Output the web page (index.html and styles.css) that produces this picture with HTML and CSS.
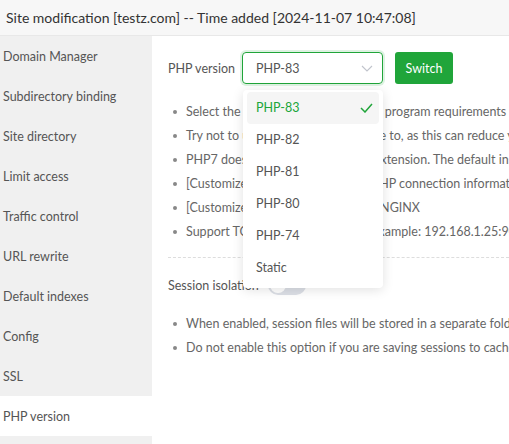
FILE: index.html
```html
<!DOCTYPE html>
<html lang="en">
<head>
<meta charset="utf-8">
<title>Site modification</title>
<link rel="stylesheet" href="styles.css">
</head>
<body>
<div class="header">Site modification [testz.com] -- Time added [2024-11-07 10:47:08]</div>
<div class="layout">
  <nav class="sidebar">
    <div class="nav-item">Domain Manager</div>
    <div class="nav-item">Subdirectory binding</div>
    <div class="nav-item">Site directory</div>
    <div class="nav-item">Limit access</div>
    <div class="nav-item">Traffic control</div>
    <div class="nav-item">URL rewrite</div>
    <div class="nav-item">Default indexes</div>
    <div class="nav-item">Config</div>
    <div class="nav-item">SSL</div>
    <div class="nav-item active">PHP version</div>
    <div class="nav-item blank"></div>
  </nav>
  <main class="main">
    <div class="form-row">
      <span class="label">PHP version</span>
      <div class="select">
        <span>PHP-83</span>
        <svg class="chevron" width="12" height="7" viewBox="0 0 12 7"><path d="M1 1l5 5 5-5" fill="none" stroke="#c0c4cc" stroke-width="1.1"/></svg>
      </div>
      <button class="btn">Switch</button>
    </div>
    <ul class="tips">
      <li>Select the version according to your program requirements</li>
      <li>Try not to use PHP5 unless you have to, as this can reduce your server security</li>
      <li>PHP7 does not support the mysql extension. The default installation includes mysqli</li>
      <li>[Customize] Customize the global PHP connection information</li>
      <li>[Customize] Currently only support NGINX</li>
      <li>Support TCP or UNIX sockets, for example: 192.168.1.25:9001</li>
    </ul>
    <div class="divider"></div>
    <div class="form-row session-row">
      <span class="label session-label">Session isolation</span>
      <span class="toggle"><span class="knob"></span></span>
    </div>
    <ul class="tips">
      <li>When enabled, session files will be stored in a separate folder "/tmp/session/"</li>
      <li>Do not enable this option if you are saving sessions to caches such as redis/memcache</li>
    </ul>
    <div class="dropdown">
      <div class="option selected">PHP-83
        <svg class="check" width="13" height="10" viewBox="0 0 13 10"><path d="M1 5l4 4 7-8" fill="none" stroke="#20a53a" stroke-width="1.5"/></svg>
      </div>
      <div class="option">PHP-82</div>
      <div class="option">PHP-81</div>
      <div class="option">PHP-80</div>
      <div class="option">PHP-74</div>
      <div class="option">Static</div>
    </div>
  </main>
</div>
</body>
</html>
```
FILE: styles.css
```css
* { box-sizing: border-box; }
html, body { margin: 0; padding: 0; }
body {
  font-family: "Segoe UI", Lato, "Liberation Sans", sans-serif;
  color: #333;
  background: #fff;
  width: 509px;
  height: 444px;
  overflow: hidden;
}
.header {
  height: 36px;
  line-height: 35px;
  padding-left: 6px;
  font-size: 14px;
  color: #333;
  background: #f7f7f7;
  border-bottom: 1px solid #e8e8e8;
  white-space: nowrap;
}
.layout {
  display: flex;
  height: 408px;
}
.sidebar {
  width: 152px;
  flex: none;
  background: #f0f0f0;
}
.nav-item {
  height: 40px;
  line-height: 41px;
  padding-left: 3px;
  font-size: 12.5px;
  color: #555;
  white-space: nowrap;
}
.nav-item.active {
  background: #fff;
}
.main {
  flex: 1;
  position: relative;
  padding: 16px 0 0 16px;
  overflow: hidden;
  white-space: nowrap;
}
.form-row {
  display: flex;
  align-items: center;
  height: 32px;
}
.label {
  width: 74px;
  font-size: 12.5px;
  color: #555;
}
.select {
  width: 141px;
  height: 32px;
  border: 1px solid #20a53a;
  border-radius: 4px;
  box-shadow: 0 0 0 2px rgba(32, 165, 58, 0.15);
  display: flex;
  align-items: center;
  justify-content: space-between;
  padding: 0 9px 0 13px;
  font-size: 12.5px;
  color: #555;
}
.btn {
  margin-left: 12px;
  width: 58px;
  height: 32px;
  border: none;
  border-radius: 3px;
  background: #20a53a;
  color: #fff;
  font-family: inherit;
  font-size: 12.5px;
  padding: 0;
}
.tips {
  list-style: none;
  margin: 15px 0 0 0;
  padding: 0;
}
.tips li {
  position: relative;
  height: 24px;
  line-height: 25px;
  padding-left: 18px;
  font-size: 12.5px;
  color: #666;
}
.tips li::before {
  content: "";
  position: absolute;
  left: 5px;
  top: 11px;
  width: 4px;
  height: 4px;
  border-radius: 50%;
  background: #888;
}
.divider {
  margin-top: 14px;
  border-top: 1px dashed #ddd;
}
.session-row {
  margin-top: 17px;
  height: 20px;
}
.session-label {
  width: 100px;
}
.toggle {
  position: relative;
  width: 38px;
  height: 20px;
  border-radius: 10px;
  background: #dcdfe6;
}
.knob {
  position: absolute;
  left: 2px;
  top: 2px;
  width: 16px;
  height: 16px;
  border-radius: 50%;
  background: #fff;
}
.session-row + .tips {
  margin-top: 16px;
}
.dropdown {
  position: absolute;
  left: 91px;
  top: 54px;
  width: 140px;
  padding: 2px 4px 4px;
  background: #fff;
  border-radius: 4px;
  box-shadow: 0 2px 12px rgba(0, 0, 0, 0.12);
}
.option {
  height: 32px;
  line-height: 32px;
  padding-left: 9px;
  font-size: 12.5px;
  color: #555;
  border-radius: 4px;
  position: relative;
}
.option.selected {
  background: #f5f5f5;
  color: #20a53a;
}
.check {
  position: absolute;
  right: 6px;
  top: 11px;
}
```
